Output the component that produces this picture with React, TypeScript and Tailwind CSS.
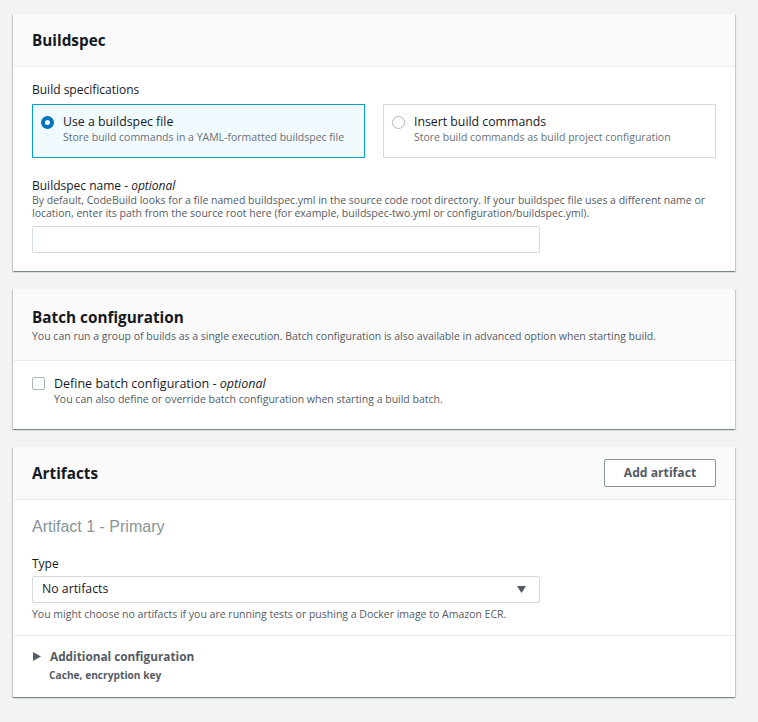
import React from 'react';

const font = { fontFamily: '"Open Sans", Roboto, Arial, sans-serif' };

const Panel: React.FC<{ children: React.ReactNode }> = ({ children }) => (
  <div className="bg-white shadow-[0_1px_1px_0_rgba(0,28,36,0.3),1px_1px_1px_0_rgba(0,28,36,0.15),-1px_1px_1px_0_rgba(0,28,36,0.15)]">
    {children}
  </div>
);

const RadioTile: React.FC<{ selected?: boolean; title: string; desc: string }> = ({ selected, title, desc }) => (
  <div
    className={`flex-1 h-[54px] border flex items-start gap-[9px] pl-[8px] pt-[9px] ${
      selected ? 'bg-[#f1faff] border-[#00a1c9]' : 'bg-white border-[#d5dbdb]'
    }`}
  >
    {selected ? (
      <span className="mt-[2px] w-[13px] h-[13px] rounded-full border-[4px] border-[#0073bb] bg-white shrink-0" />
    ) : (
      <span className="mt-[2px] w-[13px] h-[13px] rounded-full border border-[#aab7b8] bg-white shrink-0" />
    )}
    <div>
      <div className="text-[12.3px] text-[#16191f] leading-[16px]">{title}</div>
      <div className="text-[10.5px] text-[#687078] leading-[15px]">{desc}</div>
    </div>
  </div>
);

export default function App() {
  return (
    <div className="min-h-screen bg-[#f2f3f3] pt-[14px] pl-[13px] pr-[23px] pb-6 text-[#16191f]" style={font}>
      <div className="flex flex-col gap-[18px]">
        <Panel>
          <div className="h-[53px] bg-[#fafafa] border-b border-[#eaeded] flex items-center px-[19px]">
            <h2 className="text-[15.3px] font-bold">Buildspec</h2>
          </div>
          <div className="px-[19px] pt-[14px] pb-[18px]">
            <div className="text-[12px] leading-[18px]">Build specifications</div>
            <div className="flex gap-[18px] mt-[5px]">
              <RadioTile selected title="Use a buildspec file" desc="Store build commands in a YAML-formatted buildspec file" />
              <RadioTile title="Insert build commands" desc="Store build commands as build project configuration" />
            </div>
            <div className="mt-[19px] text-[12px] leading-[17px]">
              Buildspec name - <i>optional</i>
            </div>
            <p className="text-[10.5px] leading-[13px] text-[#545b64]">
              By default, CodeBuild looks for a file named buildspec.yml in the source code root directory. If your buildspec file uses a different name or location, enter its path from the source root here (for example, buildspec-two.yml or configuration/buildspec.yml).
            </p>
            <div className="mt-[6px] w-[508px] h-[27px] border border-[#d5dbdb] rounded-[2px] bg-white" />
          </div>
        </Panel>

        <Panel>
          <div className="h-[72px] bg-[#fafafa] border-b border-[#eaeded] flex flex-col justify-center px-[19px]">
            <h2 className="text-[15.3px] font-bold leading-[22px] mt-[1px]">Batch configuration</h2>
            <p className="text-[10.5px] text-[#545b64] leading-[16px]">
              You can run a group of builds as a single execution. Batch configuration is also available in advanced option when starting build.
            </p>
          </div>
          <div className="px-[19px] pt-[14px] pb-[22px] flex gap-[9px]">
            <span className="mt-[2px] w-[13px] h-[13px] border border-[#aab7b8] rounded-[2px] bg-white shrink-0" />
            <div>
              <div className="text-[12.5px] leading-[17px]">
                Define batch configuration - <i>optional</i>
              </div>
              <div className="text-[10.5px] text-[#545b64] leading-[15px]">
                You can also define or override batch configuration when starting a build batch.
              </div>
            </div>
          </div>
        </Panel>

        <Panel>
          <div className="h-[53px] bg-[#fafafa] border-b border-[#eaeded] flex items-center justify-between pl-[19px] pr-[19px]">
            <h2 className="text-[15.3px] font-bold mt-[1px]">Artifacts</h2>
            <button className="w-[112px] h-[28px] border border-[#879596] rounded-[2px] bg-white text-[12.2px] font-bold text-[#545b64]">
              Add artifact
            </button>
          </div>
          <div className="px-[19px] pt-[16px] pb-[13px] border-b border-[#eaeded]">
            <div className="text-[16px] text-[#879596] leading-[22px]" style={{ fontFamily: '"Liberation Sans", Arial, sans-serif' }}>
              Artifact 1 - Primary
            </div>
            <div className="mt-[17px] text-[12px] leading-[18px]">Type</div>
            <div className="mt-[3px] w-[508px] h-[27px] border border-[#d5dbdb] rounded-[2px] bg-white flex items-center justify-between pl-[9px] pr-[13px]">
              <span className="text-[12.3px]">No artifacts</span>
              <svg width="9" height="7" viewBox="0 0 9 7">
                <path d="M0 0h9L4.5 7z" fill="#545b64" />
              </svg>
            </div>
            <p className="mt-[3px] text-[10.5px] text-[#545b64] leading-[16px]">
              You might choose no artifacts if you are running tests or pushing a Docker image to Amazon ECR.
            </p>
          </div>
          <div className="px-[19px] pt-[11px] pb-[12px]">
            <div className="flex items-center gap-[9px]">
              <svg width="8" height="9" viewBox="0 0 8 9" className="ml-[1px]">
                <path d="M0 0l8 4.5L0 9z" fill="#545b64" />
              </svg>
              <span className="text-[11.8px] font-bold text-[#545b64] leading-[18px]">Additional configuration</span>
            </div>
            <div className="pl-[17px] text-[10.2px] font-bold text-[#545b64] leading-[20px]">Cache, encryption key</div>
          </div>
        </Panel>
      </div>
    </div>
  );
}
